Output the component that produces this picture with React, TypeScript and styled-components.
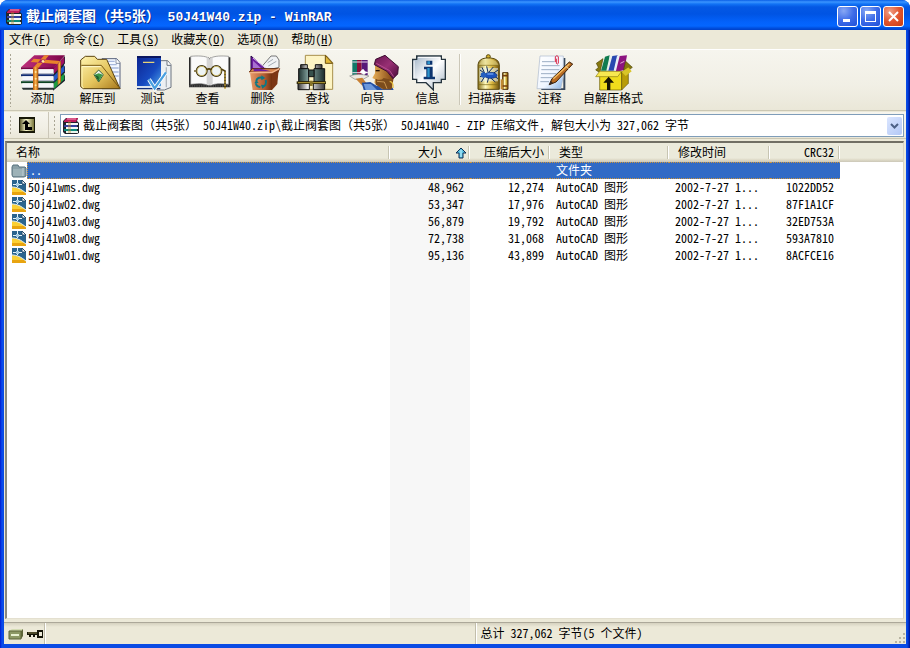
import React from "react";
import styled, { createGlobalStyle } from "styled-components";

const Global = createGlobalStyle`
  *, *::before, *::after { box-sizing: border-box; }
  body { margin: 0; background: #fff; }
  body, button, select, table {
    font-family: "Noto Sans Mono CJK SC", "Noto Sans CJK SC", monospace;
    font-size: 12px;
    line-height: 16px;
    color: #000;
  }
`;

const Frame = styled.div`
  display: flex;
  flex-direction: column;
  height: 100vh;
  min-height: 360px;
  padding: 0 4px 4px;
  background: linear-gradient(90deg, #0019cf, #0a4df0 2px, #0a4be4 3px, #0a4be4 calc(100% - 3px), #0038d8 calc(100% - 2px), #00138c);
  border-radius: 8px 8px 0 0;
  overflow: hidden;
`;

const TitleBar = styled.header`
  flex: none;
  display: flex;
  align-items: center;
  gap: 4px;
  height: 30px;
  margin: 0 -4px;
  padding: 3px 6px 0;
  background: linear-gradient(180deg, #0a5fe6 0, #3b95ff 2px, #1273f5 4px, #0458e4 7px, #0054e3 14px, #0362fb 22px, #0466ff 26px, #0050e0 28px, #0040c8 30px);
`;

const Title = styled.h1`
  flex: 1;
  margin: 0;
  font-size: 14px;
  line-height: 20px;
  font-weight: 700;
  color: #fff;
  white-space: pre;
  text-shadow: 1px 1px 0 #0a2a8c;
`;

const TitleLatin = styled.span`
  font-family: "Liberation Mono", monospace;
  font-size: 13px;
`;

const WindowButtons = styled.div`
  display: flex;
  gap: 2px;
`;

const WindowButton = styled.button<{ $close?: boolean }>`
  display: grid;
  place-items: center;
  width: 21px;
  height: 21px;
  padding: 0;
  border: 1px solid #fff;
  border-radius: 3px;
  background: ${(p) =>
    p.$close
      ? "radial-gradient(circle at 30% 25%, #f0a088, #e2552f 50%, #c83c12)"
      : "radial-gradient(circle at 30% 20%, #88a8f4, #3e6ce8 50%, #1e50d8)"};
`;

const Body = styled.div`
  flex: 1;
  min-height: 0;
  display: flex;
  flex-direction: column;
  background: #ece9d8;
`;

const MenuBar = styled.nav`
  flex: none;
  display: flex;
  height: 20px;
  border-bottom: 1px solid #fff;
`;

const MenuItem = styled.button`
  padding: 0 6px 1px;
  border: 0;
  background: none;
  white-space: nowrap;
  &:first-child { padding-left: 5px; }
`;

const BarRow = styled.div<{ $height: number }>`
  flex: none;
  display: flex;
  align-items: stretch;
  height: ${(p) => p.$height}px;
  padding-left: 4px;
  background: linear-gradient(180deg, #f6f5ee, #f1efe5 60%, #eae7d8);
  border-bottom: 1px solid #cbc7b3;
  margin-bottom: 1px;
`;

const Grip = styled.span`
  flex: none;
  width: 3px;
  margin: 4px 0 3px;
  background: conic-gradient(from 90deg at 2px 2px, transparent 75%, #a9a594 0) 0 0 / 3px 4px;
`;

const Tools = styled.div`
  display: flex;
  margin-left: 4px;
`;

const ToolButton = styled.button<{ $width?: number }>`
  display: flex;
  flex-direction: column;
  align-items: center;
  width: ${(p) => p.$width ?? 55}px;
  padding: 4px 0 0;
  border: 0;
  background: none;
  line-height: 14px;
  white-space: nowrap;
  svg { display: block; flex: none; overflow: visible; }
`;

const Separator = styled.span`
  flex: none;
  width: 2px;
  margin: 4px 1px 5px 4px;
  border-left: 1px solid #cbc7b8;
  border-right: 1px solid #fff;
`;

const UpButton = styled.button`
  display: grid;
  place-items: center;
  width: 38px;
  padding: 0 6px 0 0;
  margin-right: 3px;
  border: 0;
  border-right: 1px solid #cbc7b8;
  background: none;
`;

const Combo = styled.label`
  flex: 1;
  display: flex;
  align-items: center;
  gap: 4px;
  min-width: 0;
  height: 23px;
  margin: 2px 2px 0 5px;
  padding: 0 1px 0 2px;
  border: 1px solid #7f9db9;
  background: #fff;
  svg { flex: none; }
`;

const PathSelect = styled.select`
  flex: 1;
  min-width: 0;
  height: 20px;
  padding: 0 0 1px;
  border: 0;
  outline: 0;
  appearance: none;
  background: none;
`;

const DropMark = styled.span`
  flex: none;
  display: grid;
  place-items: center;
  width: 15px;
  height: 18px;
  border-radius: 2px;
  background: linear-gradient(135deg, #dbe6ff, #b3c8f6);
  pointer-events: none;
`;

const ListPanel = styled.main`
  flex: 1;
  min-height: 0;
  margin: 1px 2px 3px 1px;
  border: 1px solid #7f9db9;
  border-top: 2px solid #716f64;
  border-left: 2px solid #8a897f;
  border-right-color: #d8d4c4;
  border-bottom-color: #e4e0d0;
  background: #fff;
  overflow: hidden;
`;

const FileTable = styled.table`
  width: 100%;
  height: 100%;
  table-layout: fixed;
  border-collapse: separate;
  border-spacing: 0;
  white-space: nowrap;
`;

const Col = styled.col<{ $width?: number }>`
  width: ${(p) => (p.$width ? `${p.$width}px` : "auto")};
`;

const HeadCell = styled.th<{ $right?: boolean; $bare?: boolean }>`
  position: relative;
  height: 19px;
  padding: 0 ${(p) => (p.$right ? 6 : 0)}px 2px 9px;
  font-weight: 400;
  line-height: 16px;
  text-align: ${(p) => (p.$right ? "right" : "left")};
  background: linear-gradient(180deg, #ebeadb 15px, #ddd9c6 17px, #cbc7b8);
  svg { vertical-align: -2px; margin-left: 13px; margin-right: -3px; }
  &::after {
    content: ${(p) => (p.$bare ? "none" : '""')};
    position: absolute;
    top: 3px;
    bottom: 3px;
    right: 0;
    width: 2px;
    border-left: 1px solid #c7c5b2;
    border-right: 1px solid #fff;
  }
`;

const Row = styled.tr<{ $selected?: boolean }>`
  height: 17px;
  color: ${(p) => (p.$selected ? "#fff" : "#000")};
`;

const Cell = styled.td<{ $right?: boolean; $sorted?: boolean; $selected?: boolean }>`
  height: 17px;
  padding: 0 6px 2px;
  line-height: ${(p) => (p.$selected ? 13 : 15)}px;
  text-align: ${(p) => (p.$right ? "right" : "left")};
  background: ${(p) => (p.$selected ? "#316ac5" : p.$sorted ? "#f7f7f7" : "#fff")};
  ${(p) => p.$selected && "border-top: 1px dotted #ce953a; border-bottom: 1px dotted #ce953a;"}
`;

const NameCell = styled.td`
  height: 17px;
  padding: 0 0 0 4px;
`;

const NameBox = styled.div`
  display: flex;
  align-items: center;
  height: 17px;
  svg { flex: none; }
`;

const NameText = styled.span<{ $selected?: boolean }>`
  flex: 1;
  height: 17px;
  padding: 0 1px 2px;
  line-height: ${(p) => (p.$selected ? 13 : 15)}px;
  ${(p) => p.$selected && "background: #316ac5; border: 1px dotted #ce953a; border-right: 0; padding-left: 2px;"}
`;

const FillRow = styled.tr`
  td { height: auto; padding: 0; }
`;

const StatusBar = styled.footer`
  flex: none;
  display: flex;
  height: 22px;
  border-top: 1px solid #aca899;
  background: linear-gradient(180deg, #d5d1bf, #ece9d8 4px, #ece9d8);
`;

const StatusIcons = styled.div`
  display: flex;
  align-items: center;
  gap: 3px;
  width: 41px;
  padding-left: 4px;
  border-right: 1px solid #c2beab;
`;

const StatusPane = styled.div`
  flex: 1;
  display: flex;
  justify-content: space-between;
  padding: 2px 0 0 4px;
  border-left: 1px solid #fff;
  & + & { box-shadow: -1px 0 0 #c2beab; }
  svg { align-self: flex-end; }
`;

/* ---------- icons ---------- */

const BooksSmall = () => (
  <svg width="16" height="16" viewBox="0 0 16 16" aria-hidden="true">
    <path d="M0 3 3 0h12l-1 3 2 2v10l-2 1H2l-2-2z" fill="#20242c" />
    <path d="M1 3 4 0h11l-2 4H1z" fill="#c01c5c" />
    <path d="M4 1h9" stroke="#f098b8" />
    <path d="M3 5h12v2H3z" fill="#f6f6f6" />
    <path d="M1 7h13v2H1z" fill="#34409c" />
    <path d="M3 9h12v2H3z" fill="#f6f6f6" />
    <path d="M1 11h13v2H1z" fill="#0c8a78" />
    <path d="M3 13h12v2H3z" fill="#e8f4ec" />
    <path d="M5 3h3v12H5z" fill="#c08638" opacity=".4" />
  </svg>
);

const Big = ({ children }: { children: React.ReactNode }) => (
  <svg width="48" height="37" viewBox="0 0 144 111" aria-hidden="true">
    {children}
  </svg>
);

const AddIcon = () => (
  <Big>
    <defs>
      <linearGradient id="addTop" x1="0" x2="1"><stop offset="0" stopColor="#c0307c" /><stop offset="1" stopColor="#7c0448" /></linearGradient>
      <linearGradient id="belt" x1="0" x2="1"><stop offset="0" stopColor="#b45a10" /><stop offset=".5" stopColor="#ffb44c" /><stop offset="1" stopColor="#a04c08" /></linearGradient>
    </defs>
    <path d="M102 42 138 6v22l-4 6 4 4v18l-4 4 4 6v14l-36 30z" fill="#1c2430" />
    <path d="M104 42 136 8v18l-32 34z" fill="#a01060" />
    <path d="M104 66 136 34v18l-32 32z" fill="#2458c8" />
    <path d="M104 88 136 58v18l-32 30z" fill="#1c9c40" />
    <path d="M6 40 46 4h92l-34 38z" fill="url(#addTop)" />
    <path d="M6 40h98v6H6z" fill="#7c0448" />
    <path d="M10 46h94v15H10z" fill="#f5f6fa" /><path d="M10 57h94v4H10z" fill="#b4b8c8" />
    <path d="M6 61h98v6H6z" fill="#122c74" />
    <path d="M10 67h94v15H10z" fill="#f5f6fa" /><path d="M10 78h94v4H10z" fill="#b4b8c8" />
    <path d="M6 82h98v6H6z" fill="#0e4426" />
    <path d="M10 88h94v14H10z" fill="#f5f6fa" /><path d="M8 101h96v6H12z" fill="#2a3234" />
    <path d="M42 42 76 4h14L58 42zM44 14l-9 10 80 6 8-9z" fill="#e8842c" />
    <path d="M42 40h16v68H42" fill="url(#belt)" />
    <path d="m116 30 10-10v64l-10 10z" fill="url(#belt)" />
    <g fill="#ffe6a0"><circle cx="50" cy="54" r="3" /><circle cx="50" cy="74" r="3" /><circle cx="50" cy="94" r="3" /><circle cx="72" cy="22" r="4" /></g>
  </Big>
);

const ExtractIcon = () => (
  <Big>
    <defs><linearGradient id="fold" x1="0" y1="0" x2="1" y2="1"><stop offset="0" stopColor="#fff4b0" /><stop offset=".55" stopColor="#e4c45c" /><stop offset="1" stopColor="#a8781c" /></linearGradient></defs>
    <path d="M84 14h44l10 12v78H84z" fill="#f4f8ff" stroke="#56607c" strokeWidth="3" />
    <path d="M92 22h30M98 32h30M104 42h30M112 54h22M120 66h14" stroke="#a8b8dc" strokeWidth="4" />
    <path d="M126 14v14h12" fill="#fff" stroke="#56607c" strokeWidth="2" />
    <path d="M20 18 34 7h28l8 9h28l40 88H28L20 98z" fill="url(#fold)" stroke="#5c4410" strokeWidth="3" />
    <path d="M22 34h60l56 70" fill="none" stroke="#7a5c18" strokeWidth="3" />
    <path d="M24 38h56" stroke="#fffbd4" strokeWidth="3" />
    <path d="M24 38v58l4 6" fill="none" stroke="#fff6b8" strokeWidth="3" />
    <path d="m60 62 14-14 14 14-14 22z" fill="#eef4ea" stroke="#39613a" strokeWidth="3" />
    <path d="m62 62 12-4 12 4-12 20z" fill="#3c9848" />
    <path d="m62 62 12 6v14z" fill="#1b5c28" />
  </Big>
);

const TestIcon = () => (
  <Big>
    <defs><linearGradient id="test" x1="0" y1="0" x2="1" y2="1"><stop offset="0" stopColor="#0d2490" /><stop offset=".6" stopColor="#164ac0" /><stop offset="1" stopColor="#4aa0e8" /></linearGradient></defs>
    <path d="M94 20h22l10 12v68l-20 8H84z" fill="#eceff2" stroke="#6c7480" strokeWidth="3" />
    <path d="M114 20v14h12" fill="#fff" stroke="#6c7480" strokeWidth="3" />
    <path d="M112 40v60" stroke="#b0b8c0" strokeWidth="4" />
    <path d="M24 6h72v90H24z" fill="url(#test)" />
    <path d="M24 6h72v6H24z" fill="#0a1660" />
    <path d="M42 25h34" stroke="#e6d278" strokeWidth="4" />
    <path d="M24 96h72v6H24z" fill="#dbe4ee" /><path d="M24 102h70v4H24z" fill="#12307c" />
    <path d="m60 76 17 27 34-48" fill="none" stroke="#fff" strokeWidth="12" />
    <path d="m60 76 17 27 34-48" fill="none" stroke="#4aa0e0" strokeWidth="7" />
  </Big>
);

const ViewIcon = () => (
  <Big>
    <path d="M15 10h58l4 4 4-4h58v90H15z" fill="#282828" />
    <path d="M20 7c20-2 44-2 56 6v82c-18-8-38-6-56-4zM78 13c14-8 36-8 56-6v84c-18-2-38-4-56 4z" fill="#fafafa" stroke="#777" strokeWidth="2" />
    <path d="M68 9c5 0 8 4 9 8v76l-9-4zM86 9c-5 0-8 4-9 8v76l9-4z" fill="#d4d4d4" />
    <path d="M16 96h122" stroke="#666" strokeWidth="3" strokeDasharray="4 3" />
    <g fill="#fff" stroke="#3a3010" strokeWidth="6"><circle cx="53" cy="51" r="15" /><circle cx="97" cy="51" r="15" /></g>
    <g fill="#eef4f4" stroke="#c8b464" strokeWidth="3"><circle cx="53" cy="51" r="14" /><circle cx="97" cy="51" r="14" /></g>
    <path d="M68 48q7-7 14 0M113 46l10 5v52" fill="none" stroke="#55420c" strokeWidth="5" />
    <path d="M123 54v52" stroke="#d4b044" strokeWidth="3" strokeDasharray="6 3" />
    <path d="M36 51h-6" stroke="#74602c" strokeWidth="4" />
  </Big>
);

const DeleteIcon = () => (
  <Big>
    <defs><linearGradient id="bin" x1="0" x2="1"><stop offset="0" stopColor="#e89a68" /><stop offset=".65" stopColor="#b25c32" /><stop offset="1" stopColor="#70300e" /></linearGradient></defs>
    <path d="m70 36 26-30h16l8 12v22l-34 8z" fill="#f0f2f4" stroke="#777" strokeWidth="3" />
    <path d="m86 26 16-10M88 36l24-14" stroke="#a4acb4" strokeWidth="3" />
    <path d="M36 50V6l52 46z" fill="#6c1ca0" stroke="#2a0848" strokeWidth="3" />
    <path d="M42 42V20l26 24z" fill="#a870d0" />
    <path d="m42 12 44 36" stroke="#e2b8fc" strokeWidth="3" />
    <path d="m31 54 9-10h82l-7 14z" fill="#d88850" stroke="#5c2408" strokeWidth="3" />
    <path d="M44 52h52l-32-8H44z" fill="#6c1ca0" />
    <path d="M33 56h66v52H41z" fill="url(#bin)" />
    <path d="m99 56 20-10-4 44-16 18z" fill="#7c3614" />
    <path d="M31 56h68l22-12" fill="none" stroke="#f2b48a" strokeWidth="4" />
    <path d="M52 82c0-10 10-14 20-9M80 78c4 10-2 18-8 20M64 99c-10-1-13-7-13-11" fill="none" stroke="#0e7884" strokeWidth="6" />
    <path d="m67 64 12 8-12 7zM82 94 70 104l-4-12zM46 88l6-10 7 9z" fill="#0e7884" />
  </Big>
);

const FindIcon = () => (
  <Big>
    <defs>
      <linearGradient id="tube" x1="0" x2="1"><stop offset="0" stopColor="#223432" /><stop offset=".4" stopColor="#88a8a4" /><stop offset="1" stopColor="#1c2c2c" /></linearGradient>
      <linearGradient id="steel" x1="0" x2="1"><stop offset="0" stopColor="#333" /><stop offset=".4" stopColor="#fff" /><stop offset="1" stopColor="#3a3a3a" /></linearGradient>
    </defs>
    <path d="M34 4h62l20 22v80H34z" fill="#fdf4c4" stroke="#a8904c" strokeWidth="3" />
    <path d="M94 4v24h22z" fill="#e0b838" stroke="#6c5010" strokeWidth="3" />
    <g stroke="#111" strokeWidth="3">
      <path d="M20 32h20v12H20zM64 32h20v12H64z" fill="url(#steel)" />
      <path d="M14 44h30v40H14zM60 44h32v40H60z" fill="url(#tube)" />
      <path d="M12 84h34v23H12zM58 84h34v23H58z" fill="url(#steel)" />
      <path d="M44 48h16v20H44z" fill="#37504c" />
    </g>
    <path d="M8 82h88v8H8z" fill="#302808" /><path d="M12 86h82" stroke="#b8a038" strokeWidth="3" />
    <path d="M48 80h8v16h-8z" fill="#887428" />
  </Big>
);

const WizardIcon = () => (
  <Big>
    <defs>
      <linearGradient id="hat" x1="0" x2="1" y2="1"><stop offset="0" stopColor="#681450" /><stop offset=".5" stopColor="#983074" /><stop offset="1" stopColor="#480838" /></linearGradient>
      <linearGradient id="face" x1="0" x2="1"><stop offset="0" stopColor="#e8b058" /><stop offset="1" stopColor="#7c4010" /></linearGradient>
    </defs>
    <path d="M10 18h14v46H10z" fill="#127868" /><path d="M24 18h14v46H24z" fill="#8c1038" /><path d="M38 18h18v46H38z" fill="#561878" />
    <path d="M10 24h46M10 56h46" stroke="#ecd8ec" strokeWidth="3" />
    <path d="m40 46 4 0 4 6 10 3-10 4-4 10-4-10-8-4z" fill="#fff" />
    <path d="M2 66q26-10 58 0l-18 10H18z" fill="#ece8e0" stroke="#888" strokeWidth="2" />
    <path d="m20 74 20-3 12 16-12 8z" fill="#c88034" />
    <path d="m38 86 26-2 20 12 40-8 10 20H44z" fill="#2450a4" />
    <path d="m44 90 22 0 18 18H50z" fill="#6c98dc" />
    <path d="m78 34 40 10 16 28-6 34H100l-24-20 2-10-8-4 8-14z" fill="url(#face)" />
    <path d="M80 74q16 8 24-2l26 6-4 28H104L80 92z" fill="#7c4c1c" />
    <path d="m84 82 22 2 8 20" fill="none" stroke="#c89450" strokeWidth="3" />
    <path d="M80 50h12" stroke="#221208" strokeWidth="4" />
    <path d="m76 32 4-16 28-12 40 34-2 22-14 14-18-22z" fill="url(#hat)" stroke="#3c0c30" strokeWidth="3" />
    <path d="m82 28 40 22 12 18" fill="none" stroke="#b85090" strokeWidth="3" />
    <path d="M122 82q12 2 10 20" fill="none" stroke="#e8c040" strokeWidth="4" />
  </Big>
);

const InfoIcon = () => (
  <Big>
    <defs><linearGradient id="info" x1="0" y1="0" x2="1" y2="1"><stop offset="0" stopColor="#9cb0c4" /><stop offset=".5" stopColor="#fff" /><stop offset="1" stopColor="#a4b4c4" /></linearGradient></defs>
    <path d="M38 6h74v10h12v60h-12v10H88v22L66 86H38V76H26V16h12z" fill="url(#info)" stroke="#26343e" strokeWidth="4" />
    <path d="M42 10h66v10h12M30 20v52" fill="none" stroke="#fff" strokeWidth="3" />
    <path d="M67 20h18v12H67zM60 38h26v30h7v8H59v-8h8V46h-7z" fill="#0c3470" />
    <path d="M70 22h8v8h-8zM70 42h7v28h-7z" fill="#2c94cc" />
  </Big>
);

const VirusIcon = () => (
  <Big>
    <defs><linearGradient id="brass" x1="0" x2="1"><stop offset="0" stopColor="#887018" /><stop offset=".35" stopColor="#fffbc0" /><stop offset=".65" stopColor="#dcb840" /><stop offset="1" stopColor="#6c5010" /></linearGradient></defs>
    <circle cx="61" cy="8" r="6" fill="#d4b02c" stroke="#5c4c0c" strokeWidth="3" />
    <path d="M30 106V32q2-18 24-20h14q24 2 26 20v74z" fill="url(#brass)" stroke="#5a4a10" strokeWidth="3" />
    <path d="M32 34q6-16 24-18h10q20 2 26 18z" fill="#e0d488" opacity=".6" />
    <path d="M32 34h60M32 92h60" stroke="#7c6814" strokeWidth="2" />
    <path d="M34 82h56V42H34z" fill="#e4f0f0" opacity=".6" />
    <path d="m42 40 8 18-14-10M36 68l16-4-12 20M60 55l-4-18M62 55l14-16M62 70l-4 16M66 70l16 14M76 58l14-10M78 66l12 8" fill="none" stroke="#102c5c" strokeWidth="3" />
    <ellipse cx="68" cy="64" rx="19" ry="9" fill="#1c54c0" stroke="#0c3078" strokeWidth="2" />
    <circle cx="46" cy="63" r="8" fill="#2460c0" /><path d="M58 60h18" stroke="#70a4f0" strokeWidth="4" />
    <path d="M104 56h16v50h-16z" fill="url(#brass)" stroke="#4c2c08" strokeWidth="3" />
    <path d="M98 76h8v30h-8z" fill="#c08830" /><path d="M104 65h16M104 96h16" stroke="#743c0c" strokeWidth="5" />
  </Big>
);

const CommentIcon = () => (
  <Big>
    <defs><linearGradient id="sheet" x1="0" y1="0" x2="1" y2="1"><stop offset="0" stopColor="#fff" /><stop offset=".6" stopColor="#f0f6ff" /><stop offset="1" stopColor="#88b4e8" /></linearGradient></defs>
    <path d="M112 12h6v96H46v-5h66z" fill="#38485c" />
    <path d="M42 6h70v62l-8 36H33z" fill="url(#sheet)" stroke="#aab8cc" strokeWidth="2" />
    <path d="M48 23h38M47 35h54M46 47h54M45 59h46M44 71h34M43 83h26" stroke="#9caec4" strokeWidth="3" />
    <path d="M88 24V8q5-6 9 0v20q-4 5-6 0V14" fill="none" stroke="#d82848" strokeWidth="3" />
    <path d="m70 92 8-18 52-50 10 6-50 54z" fill="#b86c24" stroke="#3c2008" strokeWidth="3" />
    <path d="m82 74 48-44" stroke="#f4bc60" strokeWidth="4" />
    <path d="m68 94 6-14 8 8z" fill="#3a2c24" />
    <path d="m118 36 10 8" stroke="#e8d49c" strokeWidth="3" />
  </Big>
);

const SfxIcon = () => (
  <Big>
    <path d="M36 50 48 8l14-4-2 46z" fill="#107c50" /><path d="m52 50 10-44 8-2-4 46z" fill="#e8f0ec" />
    <path d="m58 50 12-44 16-2-10 46z" fill="#2848b0" /><path d="m74 50 10-44 8-2-6 46z" fill="#e8eef8" />
    <path d="m80 54 12-48 22-2-8 44z" fill="#8c1480" /><path d="m94 28 12-6" stroke="#e4a8d8" strokeWidth="3" />
    <path d="m22 28 20-14-8 36-4 4-10-6 8-8zM110 22l20 18-18 14-8-8z" fill="#867810" stroke="#4c4404" strokeWidth="2" />
    <path d="M32 54h66v54H32z" fill="#f0dc1c" stroke="#605408" strokeWidth="2" />
    <path d="m98 54 20-14v48l-20 20z" fill="#b89c08" stroke="#605408" strokeWidth="2" />
    <path d="M32 52 20 68h66l12-16z" fill="#f8e850" stroke="#8c7c0c" strokeWidth="2" />
    <path d="m98 54 20-14 10 12-18 14z" fill="#d8c428" />
    <path d="m59 68 16 18H64v22H54V86H43z" fill="#171404" />
  </Big>
);

const UpIcon = () => (
  <svg width="16" height="16" viewBox="0 0 16 16" aria-hidden="true">
    <defs><linearGradient id="upbg" x1="0" x2="1"><stop offset="0" stopColor="#5c5a30" /><stop offset=".45" stopColor="#fffed0" /><stop offset="1" stopColor="#77743c" /></linearGradient></defs>
    <path d="M0 0h16v16H0z" fill="#181808" /><path d="M1 2h14v12H1z" fill="url(#upbg)" />
    <path d="m7 3 4 4H9v3h4v3H6V7H3z" fill="#000" />
  </svg>
);

const FolderIcon = () => (
  <svg width="16" height="15" viewBox="0 0 16 15" aria-hidden="true">
    <path d="M1 4 2 2h5l1 2h6l1 1v8l-2 1H2l-1-2z" fill="#8aa0a8" stroke="#56707c" />
    <path d="M2 6h9l1 7H2z" fill="#9db2b8" />
    <path d="M12 5v8" stroke="#c8d6da" />
  </svg>
);

const DwgIcon = () => (
  <svg width="16" height="16" viewBox="0 0 16 16" aria-hidden="true">
    <path d="M1 0h10l4 4v11H1z" fill="#2a648e" />
    <path d="M1 7c5 0 9 2 14 6v2H1z" fill="#fbd034" />
    <path d="M1 12h12l2 1v2H1z" fill="#e8a410" />
    <path d="M1 7c5 0 9 2 14 6" fill="none" stroke="#e8f4fa" />
    <path d="M6 0h1v7H6zM2 4h9v1H2z" fill="#e4f2fa" />
    <path d="M5 3h3v3H5z" fill="#a4cce4" />
    <path d="M11 0v4h4z" fill="#fff" stroke="#234b6c" />
  </svg>
);

/* ---------- data ---------- */

const MENUS: [string, string][] = [["文件", "F"], ["命令", "C"], ["工具", "S"], ["收藏夹", "O"], ["选项", "N"], ["帮助", "H"]];

const MAIN_TOOLS: [string, React.FC][] = [
  ["添加", AddIcon], ["解压到", ExtractIcon], ["测试", TestIcon], ["查看", ViewIcon],
  ["删除", DeleteIcon], ["查找", FindIcon], ["向导", WizardIcon], ["信息", InfoIcon],
];

const EXTRA_TOOLS: [string, React.FC, number][] = [
  ["扫描病毒", VirusIcon, 60], ["注释", CommentIcon, 55], ["自解压格式", SfxIcon, 72],
];

const FILES = [
  ["50j41wms.dwg", "48,962", "12,274", "1022DD52"],
  ["50j41w02.dwg", "53,347", "17,976", "87F1A1CF"],
  ["50j41w03.dwg", "56,879", "19,792", "32ED753A"],
  ["50j41w08.dwg", "72,738", "31,068", "593A7810"],
  ["50j41w01.dwg", "95,136", "43,899", "8ACFCE16"],
];

export default function App() {
  return (
    <>
      <Global />
      <Frame>
        <TitleBar>
          <BooksSmall />
          <Title>
            截止阀套图（共<TitleLatin>5</TitleLatin>张）<TitleLatin> 50J41W40.zip - WinRAR</TitleLatin>
          </Title>
          <WindowButtons>
            <WindowButton aria-label="最小化">
              <svg width="15" height="15" viewBox="0 0 15 15"><path d="M3 10h7v3H3z" fill="#fff" /></svg>
            </WindowButton>
            <WindowButton aria-label="最大化">
              <svg width="15" height="15" viewBox="0 0 15 15"><path d="M2 2h11v11H2zm1 3v7h9V5z" fill="#fff" fillRule="evenodd" /></svg>
            </WindowButton>
            <WindowButton $close aria-label="关闭">
              <svg width="15" height="15" viewBox="0 0 15 15"><path d="m3 3 9 9M12 3l-9 9" stroke="#fff" strokeWidth="2" /></svg>
            </WindowButton>
          </WindowButtons>
        </TitleBar>
        <Body>
          <MenuBar>
            {MENUS.map(([label, key]) => (
              <MenuItem key={key}>{label}(<u>{key}</u>)</MenuItem>
            ))}
          </MenuBar>
          <BarRow $height={61}>
            <Grip />
            <Tools>
              {MAIN_TOOLS.map(([label, Icon]) => (
                <ToolButton key={label}><Icon />{label}</ToolButton>
              ))}
              <Separator />
              {EXTRA_TOOLS.map(([label, Icon, width]) => (
                <ToolButton key={label} $width={width}><Icon />{label}</ToolButton>
              ))}
            </Tools>
          </BarRow>
          <BarRow $height={27}>
            <Grip />
            <UpButton aria-label="向上一级"><UpIcon /></UpButton>
            <Grip />
            <Combo>
              <BooksSmall />
              <PathSelect aria-label="路径">
                <option>截止阀套图（共5张） 50J41W40.zip\截止阀套图（共5张） 50J41W40 - ZIP 压缩文件, 解包大小为 327,062 字节</option>
              </PathSelect>
              <DropMark>
                <svg width="9" height="6" viewBox="0 0 9 6"><path d="m1 1 3.500 3.500L8 1" fill="none" stroke="#4d6185" strokeWidth="2" /></svg>
              </DropMark>
            </Combo>
          </BarRow>
          <ListPanel>
            <FileTable>
              <colgroup>
                <Col $width={383} /><Col $width={80} /><Col $width={80} /><Col $width={119} /><Col $width={101} /><Col $width={70} /><Col />
              </colgroup>
              <thead>
                <tr>
                  <HeadCell>名称</HeadCell>
                  <HeadCell $right aria-sort="ascending">
                    大小
                    <svg width="12" height="12" viewBox="0 0 12 12" aria-hidden="true">
                      <path d="m6 1 5 5H8v5H4V6H1z" fill="#5cc4e4" stroke="#0c2c54" />
                      <path d="M6 3v7" stroke="#c8f4ff" />
                    </svg>
                  </HeadCell>
                  <HeadCell $right>压缩后大小</HeadCell>
                  <HeadCell>类型</HeadCell>
                  <HeadCell>修改时间</HeadCell>
                  <HeadCell $right>CRC32</HeadCell>
                  <HeadCell $bare />
                </tr>
              </thead>
              <tbody>
                <Row $selected>
                  <NameCell><NameBox><FolderIcon /><NameText $selected>..</NameText></NameBox></NameCell>
                  <Cell $selected /><Cell $selected />
                  <Cell $selected>文件夹</Cell>
                  <Cell $selected /><Cell $selected />
                  <Cell />
                </Row>
                {FILES.map(([name, size, packed, crc]) => (
                  <Row key={name}>
                    <NameCell><NameBox><DwgIcon /><NameText>{name}</NameText></NameBox></NameCell>
                    <Cell $right $sorted>{size}</Cell>
                    <Cell $right>{packed}</Cell>
                    <Cell>AutoCAD 图形</Cell>
                    <Cell>2002-7-27 1...</Cell>
                    <Cell $right>{crc}</Cell>
                    <Cell />
                  </Row>
                ))}
                <FillRow>
                  <td /><Cell $sorted /><td colSpan={5} />
                </FillRow>
              </tbody>
            </FileTable>
          </ListPanel>
          <StatusBar>
            <StatusIcons>
              <svg width="16" height="12" viewBox="0 0 16 12" aria-hidden="true">
                <path d="m1 3 3-2h11l-2 2z" fill="#d4dcb4" /><path d="m13 3 2-2v7l-2 3z" fill="#5c6438" />
                <path d="M1 3h12v8H1z" fill="#8c9864" stroke="#5c6438" /><path d="M3 6h8v2H3z" fill="#e8f0d0" />
              </svg>
              <svg width="17" height="10" viewBox="0 0 17 10" aria-hidden="true">
                <path d="M0 3h10V1h6v8h-6V6H8v2H6V6H4v2H2V6H0z" fill="#141408" /><path d="M12 3h3v4h-3z" fill="#ece9d8" />
                <path d="M1 4h9" stroke="#88824c" />
              </svg>
            </StatusIcons>
            <StatusPane />
            <StatusPane>
              总计 327,062 字节(5 个文件)
              <svg width="13" height="13" viewBox="0 0 13 13" aria-hidden="true">
                <path d="M10 2h2v2h-2zM6 6h2v2H6zM10 6h2v2h-2zM2 10h2v2H2zM6 10h2v2H6zM10 10h2v2h-2z" fill="#b8b4a2" />
              </svg>
            </StatusPane>
          </StatusBar>
        </Body>
      </Frame>
    </>
  );
}
